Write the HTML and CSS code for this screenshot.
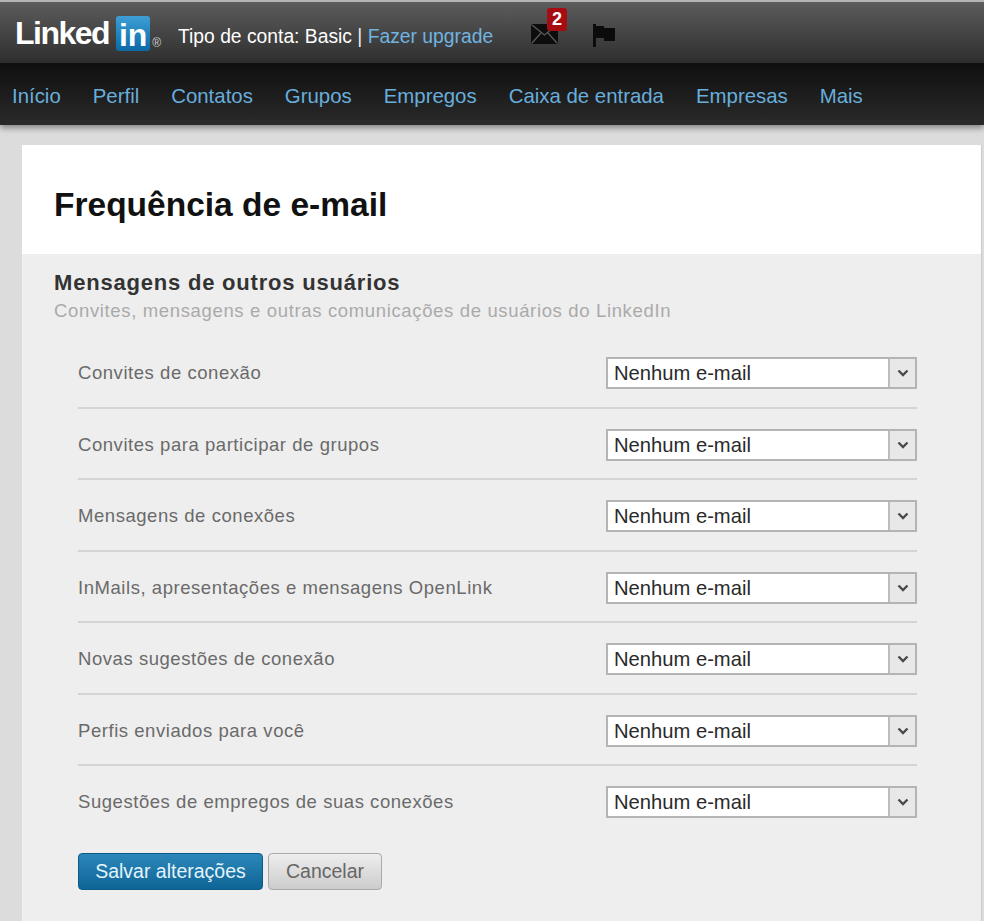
FILE: index.html
```html
<!DOCTYPE html>
<html lang="pt-BR">
<head>
  <meta charset="UTF-8">
  <title>Frequência de e-mail</title>
  <link rel="stylesheet" href="styles.css">
</head>
<body>

  <!-- barra superior -->
  <div class="topbar">
    <div class="logo">
      <span class="logo-word">Linked</span>
      <span class="logo-in">in</span>
      <span class="logo-reg">®</span>
    </div>
    <div class="account">Tipo de conta: Basic <span class="sep">|</span> <a href="#">Fazer upgrade</a></div>
    <div class="mail">
      <svg width="27" height="20" viewBox="0 0 27 20">
        <rect x="0" y="0" width="27" height="20" rx="2" fill="#0d0d0d"/>
        <path d="M1 1l12.500 10L26 1M1 19l9-10M26 19l-9-10" fill="none" stroke="#5a5a5a" stroke-width="1.300"/>
      </svg>
      <span class="badge">2</span>
    </div>
    <svg class="flag" width="24" height="24" viewBox="0 0 24 24">
      <path d="M1 1h3v2h8v2h11v13H12v-3H4v9H1z" fill="#0b0b0b"/>
    </svg>
  </div>

  <!-- menu -->
  <div class="nav">
    <a href="#">Início</a>
    <a href="#">Perfil</a>
    <a href="#">Contatos</a>
    <a href="#">Grupos</a>
    <a href="#">Empregos</a>
    <a href="#">Caixa de entrada</a>
    <a href="#">Empresas</a>
    <a href="#">Mais</a>
  </div>

  <div class="panel">
    <div class="panel-head">
      <h1>Frequência de e-mail</h1>
    </div>
    <div class="panel-body">
      <h2>Mensagens de outros usuários</h2>
      <p class="sub">Convites, mensagens e outras comunicações de usuários do LinkedIn</p>

      <div class="rows">
        <div class="row">
          <span class="label">Convites de conexão</span>
          <div class="select"><span class="value">Nenhum e-mail</span><span class="arrow"><svg width="12" height="8" viewBox="0 0 12 8"><path d="M1.500 1.500L6 6l4.500-4.500" fill="none" stroke="#4a4a4a" stroke-width="2.400"/></svg></span></div>
        </div>
        <div class="row">
          <span class="label">Convites para participar de grupos</span>
          <div class="select"><span class="value">Nenhum e-mail</span><span class="arrow"><svg width="12" height="8" viewBox="0 0 12 8"><path d="M1.500 1.500L6 6l4.500-4.500" fill="none" stroke="#4a4a4a" stroke-width="2.400"/></svg></span></div>
        </div>
        <div class="row">
          <span class="label">Mensagens de conexões</span>
          <div class="select"><span class="value">Nenhum e-mail</span><span class="arrow"><svg width="12" height="8" viewBox="0 0 12 8"><path d="M1.500 1.500L6 6l4.500-4.500" fill="none" stroke="#4a4a4a" stroke-width="2.400"/></svg></span></div>
        </div>
        <div class="row">
          <span class="label">InMails, apresentações e mensagens OpenLink</span>
          <div class="select"><span class="value">Nenhum e-mail</span><span class="arrow"><svg width="12" height="8" viewBox="0 0 12 8"><path d="M1.500 1.500L6 6l4.500-4.500" fill="none" stroke="#4a4a4a" stroke-width="2.400"/></svg></span></div>
        </div>
        <div class="row">
          <span class="label">Novas sugestões de conexão</span>
          <div class="select"><span class="value">Nenhum e-mail</span><span class="arrow"><svg width="12" height="8" viewBox="0 0 12 8"><path d="M1.500 1.500L6 6l4.500-4.500" fill="none" stroke="#4a4a4a" stroke-width="2.400"/></svg></span></div>
        </div>
        <div class="row">
          <span class="label">Perfis enviados para você</span>
          <div class="select"><span class="value">Nenhum e-mail</span><span class="arrow"><svg width="12" height="8" viewBox="0 0 12 8"><path d="M1.500 1.500L6 6l4.500-4.500" fill="none" stroke="#4a4a4a" stroke-width="2.400"/></svg></span></div>
        </div>
        <div class="row">
          <span class="label">Sugestões de empregos de suas conexões</span>
          <div class="select"><span class="value">Nenhum e-mail</span><span class="arrow"><svg width="12" height="8" viewBox="0 0 12 8"><path d="M1.500 1.500L6 6l4.500-4.500" fill="none" stroke="#4a4a4a" stroke-width="2.400"/></svg></span></div>
        </div>
      </div>

      <div class="actions">
        <button class="btn btn-save">Salvar alterações</button>
        <button class="btn btn-cancel">Cancelar</button>
      </div>
    </div>
  </div>

</body>
</html>
```

FILE: styles.css
```css
html, body {
  margin: 0;
  height: 921px;
  overflow: hidden;
}
body {
  font-family: "Liberation Sans", Arial, sans-serif;
  background: #dcdcdc;
  color: #333;
}
a { text-decoration: none; }

.topbar {
  height: 61px;
  border-top: 2px solid #b5b5b5;
  background: linear-gradient(#5c5c5c, #2e2e2e);
  display: flex;
  align-items: center;
}
.logo {
  display: flex;
  align-items: center;
  margin-left: 15px;
  width: 163px;
}
.logo-word {
  font-size: 32px;
  font-weight: bold;
  letter-spacing: -1.500px;
  color: #fff;
  margin-top: 2px;
}
.logo-in {
  width: 34px;
  height: 35px;
  margin-left: 7px;
  margin-top: 2px;
  background: linear-gradient(#3d9fd6, #0b6aa6);
  border-radius: 3px;
  color: #fff;
  font-size: 32px;
  font-weight: bold;
  line-height: 38px;
  text-align: center;
}
.logo-reg {
  font-size: 12px;
  color: #ccc;
  margin: 20px 0 0 2px;
}
.account {
  font-size: 19.300px;
  color: #fff;
  white-space: nowrap;
  width: 353px;
  margin-top: 8px;
}
.account .sep { color: #f0e8f0; }
.account a { color: #6fb4e0; }
.mail {
  position: relative;
  width: 27px;
  height: 20px;
  margin-top: 3px;
  margin-right: 34px;
}
.badge {
  position: absolute;
  top: -16px;
  left: 16px;
  width: 20px;
  height: 23px;
  background: #a50d12;
  border-radius: 3px;
  color: #fff;
  font-size: 18px;
  font-weight: bold;
  line-height: 23px;
  text-align: center;
}
.flag { margin-top: 5px; }

.nav {
  height: 62px;
  background: linear-gradient(#0f0f0f, #2a2a2a);
  box-shadow: 0 3px 6px rgba(0, 0, 0, 0.4);
  display: flex;
  align-items: center;
  gap: 32px;
  padding-left: 12px;
}
.nav a {
  font-size: 20.400px;
  color: #68aedc;
  margin-top: 4px;
}

.panel {
  margin: 20px 2px 0 22px;
  background: #eee;
  height: 780px;
  border-right: 1px solid #ccc;
}
.panel-head {
  height: 109px;
  box-sizing: border-box;
  padding: 10px 0 0 32px;
  background: #fff;
  display: flex;
  align-items: center;
}
h1 {
  margin: 0;
  font-size: 33.500px;
  color: #111;
}
.panel-body { padding: 15px 64px 0 32px; }
h2 {
  margin: 0;
  font-size: 22px;
  line-height: 28px;
  letter-spacing: 0.800px;
  color: #333;
}
.sub {
  margin: 1px 0 0;
  font-size: 18.500px;
  line-height: 26px;
  letter-spacing: 0.650px;
  color: #aaa;
}

.rows { margin: 13px 0 0 24px; }
.row {
  height: 71.500px;
  box-sizing: border-box;
  padding-top: 20px;
  border-bottom: 2px solid #d4d4d4;
  display: flex;
  justify-content: space-between;
}
.row:last-child { border-bottom: 0; }
.label {
  font-size: 18.500px;
  letter-spacing: 0.550px;
  color: #6a6a6a;
  margin-top: 5px;
}
.select {
  width: 311px;
  height: 32px;
  box-sizing: border-box;
  border: 2px solid #b4b4b4;
  background: #fff;
  display: flex;
  justify-content: space-between;
}
.value {
  font-size: 20.200px;
  line-height: 29px;
  color: #2a2a2a;
  margin-left: 6px;
}
.arrow {
  width: 25px;
  background: #e8e8e8;
  border-left: 2px solid #bdbdbd;
  display: flex;
  align-items: center;
  justify-content: center;
}

.actions {
  display: flex;
  gap: 5px;
  margin: 15px 0 0 24px;
}
.btn {
  height: 37px;
  font-family: inherit;
  font-size: 19.500px;
  border-radius: 4px;
  padding: 0;
}
.btn-save {
  width: 185px;
  background: linear-gradient(#2c87b8, #0e6597);
  border: 1px solid #0b5a88;
  color: #e4f4fb;
}
.btn-cancel {
  width: 114px;
  background: linear-gradient(#eee, #ccc);
  border: 1px solid #aaa;
  color: #666;
}
```
